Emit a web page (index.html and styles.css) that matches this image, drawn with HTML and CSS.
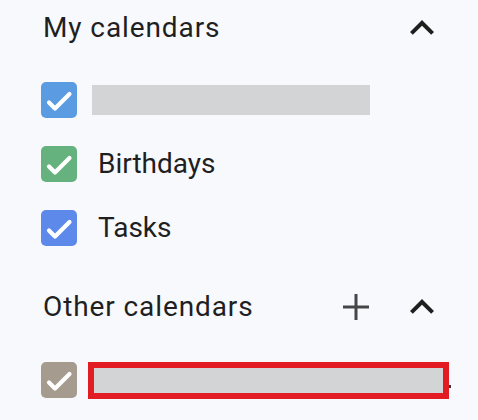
FILE: index.html
```html
<!DOCTYPE html>
<html>
<head>
<meta charset="utf-8">
<link rel="stylesheet" href="styles.css">
</head>
<body>
<div class="panel">
  <section class="section">
    <div class="header">
      <span class="title">My calendars</span>
      <div class="actions">
        <button class="icon-btn" aria-label="Collapse">
          <svg width="48" height="48" viewBox="0 0 24 24"><path d="M12 8l-6 6 1.41 1.41L12 10.83l4.59 4.58L18 14z" fill="#1f1f1f"/></svg>
        </button>
      </div>
    </div>
    <ul class="list">
      <li class="item">
        <span class="check c-blue"><svg width="36" height="36" viewBox="0 0 36 36"><path d="M8 20.5l6 6L28.5 12" fill="none" stroke="#fff" stroke-width="4.2" stroke-linecap="round" stroke-linejoin="round"/></svg></span>
        <span class="placeholder"></span>
      </li>
      <li class="item">
        <span class="check c-green"><svg width="36" height="36" viewBox="0 0 36 36"><path d="M8 20.5l6 6L28.5 12" fill="none" stroke="#fff" stroke-width="4.2" stroke-linecap="round" stroke-linejoin="round"/></svg></span>
        <span class="label">Birthdays</span>
      </li>
      <li class="item">
        <span class="check c-indigo"><svg width="36" height="36" viewBox="0 0 36 36"><path d="M8 20.5l6 6L28.5 12" fill="none" stroke="#fff" stroke-width="4.2" stroke-linecap="round" stroke-linejoin="round"/></svg></span>
        <span class="label">Tasks</span>
      </li>
    </ul>
  </section>
  <section class="section other">
    <div class="header">
      <span class="title">Other calendars</span>
      <div class="actions">
        <button class="icon-btn" aria-label="Add">
          <svg width="48" height="48" viewBox="0 0 48 48"><path d="M24 11v26M11 24h26" stroke="#444746" stroke-width="3" fill="none"/></svg>
        </button>
        <button class="icon-btn" aria-label="Collapse">
          <svg width="48" height="48" viewBox="0 0 24 24"><path d="M12 8l-6 6 1.41 1.41L12 10.83l4.59 4.58L18 14z" fill="#1f1f1f"/></svg>
        </button>
      </div>
    </div>
    <ul class="list">
      <li class="item">
        <span class="check c-taupe"><svg width="36" height="36" viewBox="0 0 36 36"><path d="M8 20.5l6 6L28.5 12" fill="none" stroke="#fff" stroke-width="4.2" stroke-linecap="round" stroke-linejoin="round"/></svg></span>
        <span class="redacted"><span class="redacted-inner"></span></span>
        <span class="dot"></span>
      </li>
    </ul>
  </section>
</div>
</body>
</html>
```

FILE: styles.css
```css
* { box-sizing: border-box; }
html, body {
  margin: 0;
  padding: 0;
  background: #f8f9fd;
  font-family: Roboto, "Noto Sans", "Liberation Sans", sans-serif;
  color: #1f1f1f;
}
.panel {
  width: 478px;
  height: 420px;
  overflow: hidden;
}
.header {
  display: flex;
  align-items: center;
  justify-content: space-between;
  height: 56px;
  padding: 0 32px 0 43px;
}
.title {
  font-size: 28px;
  font-weight: 400;
  line-height: 56px;
  letter-spacing: 0.9px;
  color: #1f1f1f;
}
.actions {
  display: flex;
  gap: 18px;
}
.icon-btn {
  width: 48px;
  height: 48px;
  padding: 0;
  border: 0;
  background: none;
  display: flex;
  align-items: center;
  justify-content: center;
}
.icon-btn svg { display: block; }
.list {
  list-style: none;
  margin: 12px 0 0;
  padding: 0;
}
.item {
  display: flex;
  align-items: center;
  height: 64px;
  padding-left: 41px;
}
.check {
  width: 36px;
  height: 36px;
  border-radius: 5px;
  flex: none;
  display: block;
}
.check svg { display: block; }
.c-blue { background: #5a9be1; }
.c-green { background: #66b27f; }
.c-indigo { background: #5d89ea; }
.c-taupe { background: #a59b8e; }
.label {
  margin-left: 21px;
  font-size: 28px;
  line-height: 36px;
  color: #1f1f1f;
}
.placeholder {
  margin-left: 15px;
  width: 278px;
  height: 30px;
  background: #d3d4d6;
}
.other {
  margin-top: 19px;
}
.other .list {
  margin-top: 13px;
}
.redacted {
  margin-left: 11px;
  width: 361px;
  height: 37px;
  border: 6px solid #e31b22;
  background: #d3d4d6;
}
.dot {
  width: 2px;
  height: 3px;
  background: #333;
  align-self: center;
  margin-top: 13px;
}
```
